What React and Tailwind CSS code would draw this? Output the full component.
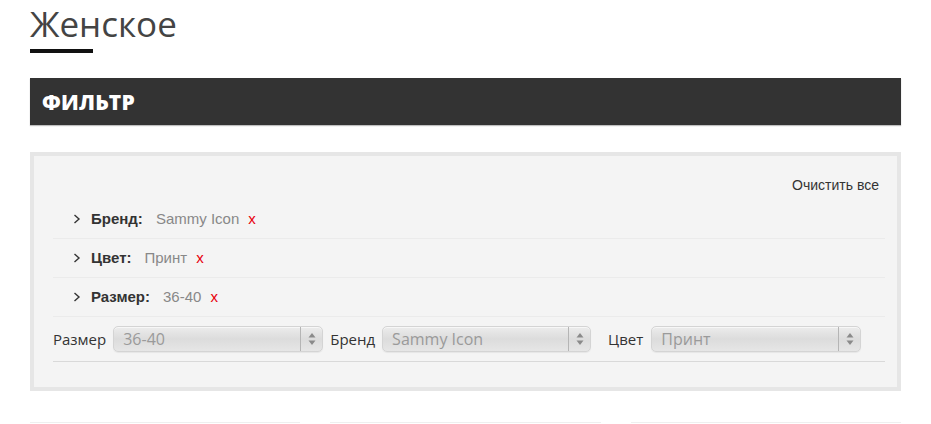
import React from "react";

function Chevron() {
  return (
    <svg width="8" height="10" viewBox="0 0 8 10" className="shrink-0">
      <polyline points="1.5,1 6,5 1.5,9" fill="none" stroke="#333" strokeWidth="1.4" />
    </svg>
  );
}

function Arrows() {
  return (
    <svg width="8" height="14" viewBox="0 0 8 14">
      <polygon points="4,1 7.5,5.5 0.5,5.5" fill="#8a8a8a" />
      <polygon points="4,13 7.5,8.5 0.5,8.5" fill="#8a8a8a" />
    </svg>
  );
}

function FakeSelect({ value, width }) {
  return (
    <div
      className={`flex h-[26px] ${width} items-center rounded-[5px] border border-[#d4d4d4] bg-gradient-to-b from-[#ececec] via-[#dcdcdc] to-[#e6e6e6] shadow-[inset_0_1px_0_rgba(255,255,255,0.6),0_1px_1px_rgba(0,0,0,0.06)]`}
    >
      <span className="flex-1 whitespace-nowrap pl-[9px] text-[16px] leading-[22px] text-[#9a9a9a] [font-family:'Open_Sans',sans-serif]">
        {value}
      </span>
      <span className="h-full w-px bg-[#b5b5b5]" />
      <span className="flex w-[21px] items-center justify-center">
        <Arrows />
      </span>
    </div>
  );
}

function Row({ label, value }) {
  return (
    <div className="flex h-[39px] items-center border-b border-[#ebebeb] pl-[20px] text-[15px] [font-family:'Liberation_Sans',Arial,sans-serif]">
      <Chevron />
      <span className="ml-[10px] font-bold text-[#333]">{label}</span>
      <span className="ml-[13px] text-[#888]">{value}</span>
      <span className="ml-[9px] text-[15px] text-[#e8000b]">x</span>
    </div>
  );
}

export default function App() {
  return (
    <div className="h-[424px] w-[931px] overflow-hidden bg-white px-[30px] [font-family:'Open_Sans',sans-serif]">
      <h1 className="pt-[7px] text-[35px] leading-[34px] font-normal text-[#444]">Женское</h1>
      <div className="mt-[8px] h-[4px] w-[63px] bg-[#111]" />

      <div className="mt-[25px] flex h-[47px] items-center bg-[#333] pl-[12px] pt-[3px] shadow-[0_1px_1px_rgba(0,0,0,0.25)]">
        <span className="text-[21px] font-extrabold tracking-[0.2px] text-white">ФИЛЬТР</span>
      </div>

      <div className="mt-[27px] border-[4px] border-[#e6e6e6] bg-[#f4f4f4] pl-[19px] pr-[12px] pt-[20px] pb-[25px]">
        <div className="flex justify-end pr-[6px] text-[14px] leading-[18px] text-[#333] [font-family:'Liberation_Sans',Arial,sans-serif]">
          Очистить все
        </div>
        <div className="mt-[6px]">
          <Row label="Бренд:" value="Sammy Icon" />
          <Row label="Цвет:" value="Принт" />
          <Row label="Размер:" value="36-40" />
        </div>
        <div className="mt-[9px] flex items-center border-b border-[#d9d9d9] pb-[9px] text-[15px] text-[#333]">
          <span>Размер</span>
          <div className="ml-[7px]">
            <FakeSelect value="36-40" width="w-[210px]" />
          </div>
          <span className="ml-[7px]">Бренд</span>
          <div className="ml-[7px]">
            <FakeSelect value="Sammy Icon" width="w-[209px]" />
          </div>
          <span className="ml-[17px]">Цвет</span>
          <div className="ml-[8px]">
            <FakeSelect value="Принт" width="w-[210px]" />
          </div>
        </div>
      </div>

      <div className="mt-[31px] grid grid-cols-3 gap-[30px]">
        <div className="h-px border-t border-[#efefef]" />
        <div className="h-px border-t border-[#efefef]" />
        <div className="h-px border-t border-[#efefef]" />
      </div>
    </div>
  );
}
